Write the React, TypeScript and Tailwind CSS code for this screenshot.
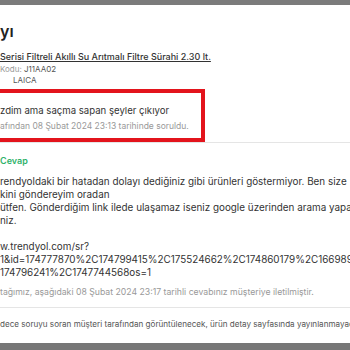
export default function App() {
  return (
    <div className="w-[350px] h-[350px] overflow-hidden bg-white flex flex-col font-['Inter',sans-serif] text-[#333]">
      {/* dimmed page behind modal */}
      <div className="h-[5px] bg-[#7b7b7b] shrink-0" />

      <div className="flex-1 overflow-hidden">
        <h1 className="mt-[16px] text-[16px] leading-[20px] font-semibold text-[#222] whitespace-nowrap">yı</h1>

        <div className="mt-[9px] text-[9px] leading-[13px] font-medium underline whitespace-nowrap">
          Serisi Filtreli Akıllı Su Arıtmalı Filtre Sürahi 2.30 lt.
        </div>
        <div className="mt-[1px] flex text-[8px] leading-[11px] whitespace-nowrap">
          <span className="text-[#999] w-[24px]">Kodu:</span>
          <span className="text-[#555]">J11AA02</span>
        </div>
        <div className="pl-[13px] text-[8px] leading-[11px] text-[#555]">LAICA</div>

        {/* question */}
        <div className="mt-[3px] relative border-b border-[#e5e5e5]">
          <div className="ml-[-6px] w-[211px] border-[4px] border-[#e3141c] pl-[2px] pt-[10px] pb-[6px]">
            <div className="text-[9.6px] leading-[15px] text-[#333] whitespace-nowrap">zdim ama saçma sapan şeyler çıkıyor</div>
            <div className="mt-[2px] text-[8.5px] leading-[12px] text-[#999] whitespace-nowrap">
              afından 08 Şubat 2024 23:13 tarihinde soruldu.
            </div>
          </div>
        </div>

        {/* answer */}
        <div className="pt-[12px] text-[9px] leading-[12px] font-semibold text-[#2fb26a]">Cevap</div>
        <div className="mt-[8px] text-[9.9px] leading-[13px] text-[#333] whitespace-nowrap">
          <div>rendyoldaki bir hatadan dolayı dediğiniz gibi ürünleri göstermiyor. Ben size</div>
          <div>kini göndereyim oradan</div>
          <div>ütfen. Gönderdiğim link ilede ulaşamaz iseniz google üzerinden arama yapa</div>
          <div>niz.</div>
          <div className="h-[13px]" />
          <div>w.trendyol.com/sr?</div>
          <div>1&amp;id=174777870%2C174799415%2C175524662%2C174860179%2C1669897</div>
          <div>174796241%2C1747744568os=1</div>
        </div>
        <div className="mt-[7px] pb-[9px] border-b border-[#e5e5e5] text-[8.7px] leading-[12px] text-[#999] whitespace-nowrap">
          tağımız, aşağıdaki 08 Şubat 2024 23:17 tarihli cevabınız müşteriye iletilmiştir.
        </div>

        <div className="mt-[10px] text-[8.1px] leading-[12px] text-[#555] whitespace-nowrap">
          dece soruyu soran müşteri tarafından görüntülenecek, ürün detay sayfasında yayınlanmayaca
        </div>
      </div>

      <div className="h-[7px] bg-[#777] shrink-0" />
    </div>
  )
}
